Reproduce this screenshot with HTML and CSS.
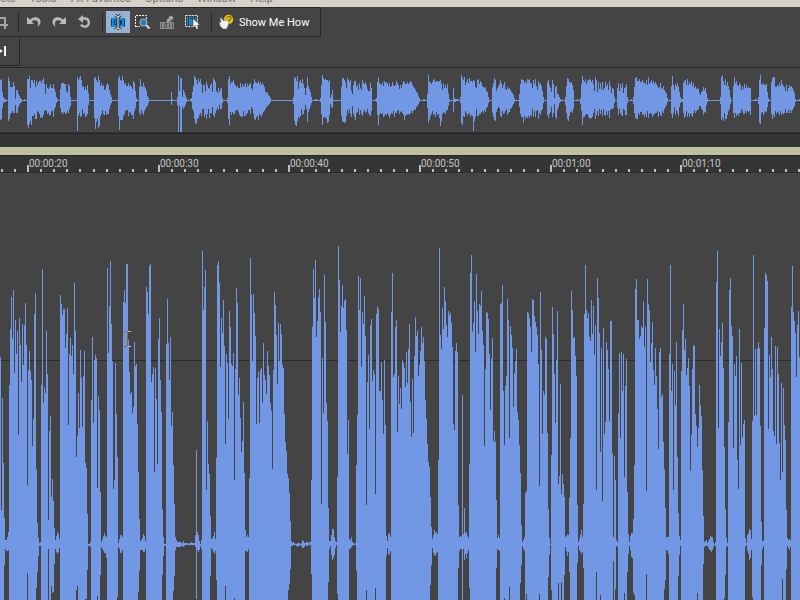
FILE: index.html
```
<!DOCTYPE html>
<html lang="en">

<head>
    <meta charset="UTF-8">
    <meta name="viewport" content="width=device-width, initial-scale=1">
    <title>Audio Editor</title>
    <link rel="stylesheet" href="styles.css">
</head>

<body>

    <!-- Menu bar -->
    <nav class="menu-bar">
        <a href="#">Effects</a>
        <a href="#">Tools</a>
        <a href="#">FX Favorites</a>
        <a href="#">Options</a>
        <a href="#">Window</a>
        <a href="#">Help</a>
    </nav>

    <!-- Toolbars -->
    <header class="toolbars">
        <div class="toolbar">
            <button class="tool-button first" aria-label="Trim">
                <svg class="icon" viewBox="0 0 16 16" fill="none" stroke="#a5a5a5" stroke-width="2">
                    <path d="M4 1v10h12M1 4h12v11" />
                </svg>
            </button>
            <span class="separator"></span>
            <button class="tool-button" aria-label="Undo">
                <svg class="icon" viewBox="0 0 16 16">
                    <path d="M1 3v7h7L5.500 7.500Q8 5.500 10.500 6.500Q13 8 11.500 13Q16 9 14 5.500Q10 .5 4 5.500z" fill="#b9b9b9" />
                </svg>
            </button>
            <button class="tool-button" aria-label="Redo">
                <svg class="icon" viewBox="0 0 16 16">
                    <path d="M15 3v7H8L10.500 7.500Q8 5.500 5.500 6.500Q3 8 4.500 13Q0 9 2 5.500Q6 .5 12 5.500z" fill="#b9b9b9" />
                </svg>
            </button>
            <button class="tool-button" aria-label="Repeat">
                <svg class="icon" viewBox="0 0 16 16">
                    <path d="M6 4.500h4a4.200 4.200 0 1 1-5 6" fill="none" stroke="#b9b9b9" stroke-width="2.400" />
                    <path d="M2 5L7 1v8z" fill="#b9b9b9" />
                </svg>
            </button>
            <span class="separator"></span>
            <button class="tool-button active" aria-label="Edit tool">
                <svg class="icon" viewBox="0 0 16 16">
                    <path d="M1 4h14v9H1z" fill="#0c90e6" />
                    <path d="M1.500 5v7M4.500 6.500h2v4h-2zM10.500 6.500h1v4h-1zM14.500 5v7" fill="none" stroke="#12385e" />
                    <path d="M5 1l3 2 3-2M8 3v11M5 16l3-2 3 2" fill="none" stroke="#333" stroke-width="3" />
                    <path d="M5 1l3 2 3-2M8 3v11M5 16l3-2 3 2" fill="none" stroke="#ccd2d5" stroke-width="1.200" />
                </svg>
            </button>
            <button class="tool-button" aria-label="Magnify tool">
                <svg class="icon" viewBox="0 0 16 16">
                    <path d="M.5 13V1.500h11V5M.5 12.500H5" fill="none" stroke="#eee" stroke-dasharray="2 1" />
                    <path d="M11 11l3.500 3.500" stroke="#ddd" stroke-width="2" />
                    <circle cx="8.500" cy="8.500" r="3.500" fill="#287cb4" stroke="#b5bcc2" />
                </svg>
            </button>
            <button class="tool-button" aria-label="Pencil tool">
                <svg class="icon" viewBox="0 0 16 16">
                    <path d="M0 8h14v7H0z" fill="#8c8c8c" />
                    <path d="M1.500 9v5M4.500 9.500h2v4h-2zM9.500 9v5M12.500 9v5" fill="none" stroke="#505050" />
                    <path d="M6 9l1-4 4-4 3 3-4 4z" fill="#aaa" stroke="#444" stroke-width=".5" />
                    <path d="M8.500 4l2.500 2.500" stroke="#666" />
                </svg>
            </button>
            <button class="tool-button" aria-label="Event tool">
                <svg class="icon" viewBox="0 0 16 16">
                    <path d="M.5 1.500h12v11H.5z" fill="none" stroke="#eee" stroke-dasharray="2 1" />
                    <path d="M2 3h9v8H2z" fill="#2684bd" />
                    <path d="M3.500 3v8M5 4.500h3v5M9.500 3v4" fill="none" stroke="#183e5d" />
                    <path d="M8 4.500v9l2-2 1.500 4 2-1-1.500-3.500h3z" fill="#f4f4f4" stroke="#444" stroke-width=".5" />
                </svg>
            </button>
            <span class="separator"></span>
            <button class="tool-button show-me">
                <svg class="icon" viewBox="0 0 16 16">
                    <circle cx="9.500" cy="5.500" r="4.700" fill="#e3c200" />
                    <path d="M8 4q0-1.500 2-1.500 2.500 0 2 2L10 6.500" fill="none" stroke="#7b6a10" stroke-width="1.200" />
                    <path d="M1 4l1-.5L4.500 7V5.500L6 7l1-1.500L8.500 7 10 6l-.5 5-2 4H4l-3-3-1-4 2 .5z" fill="#f0f0f0" stroke="#555" stroke-width=".5" />
                </svg>
                Show Me How
            </button>
        </div>
        <div class="toolbar transport">
            <button class="tool-button first" aria-label="Go to end">
                <svg class="icon" viewBox="0 0 16 16">
                    <path d="M3 3l8 5-8 5zM12 3h2v10h-2z" fill="#f4f4f4" />
                </svg>
            </button>
        </div>
    </header>

    <!-- Whole file overview -->
    <section class="overview">
        <svg id="overview-wave" viewBox="0 68 800 64" preserveAspectRatio="none"></svg>
    </section>
    <div class="marker-bar"></div>
    <div class="scroll-bar"></div>

    <!-- Time ruler -->
    <div class="ruler">
        <svg id="ruler-ticks" viewBox="0 156 800 16" preserveAspectRatio="xMinYMin slice"></svg>
    </div>

    <!-- Waveform -->
    <main class="wave-panel">
        <svg id="main-wave" viewBox="0 173 800 427" preserveAspectRatio="none"></svg>
    </main>

    <script src="waveform.js"></script>

</body>

</html>
```
FILE: styles.css
```
/* Editor window */
body {
    font-family: Roboto, sans-serif;
    font-size: 11px;
    color: #fff;
    margin: 0;
    height: 100vh;
    display: flex;
    flex-direction: column;
    background-color: #444;
    overflow: hidden;
}

svg {
    display: block;
    width: 100%;
    height: 100%;
}

/* Menu */
.menu-bar {
    display: flex;
    align-items: flex-end;
    flex-shrink: 0;
    gap: 14px;
    height: 7px;
    background-color: #d6d2c9;
    overflow: hidden;
}

.menu-bar a {
    color: #77756f;
    line-height: 17px;
    text-decoration: none;
    white-space: nowrap;
}

.menu-bar a:first-child {
    margin-left: -19px;
}

/* Toolbars */
.toolbars {
    display: flex;
    flex-direction: column;
    align-items: flex-start;
    flex-shrink: 0;
    height: 60px;
}

.toolbar {
    display: flex;
    align-items: center;
    gap: 1px;
    padding: 3px 7px 3px 0;
    border: solid #262626;
    border-width: 1px 1px 1px 0;
}

.toolbar.transport {
    border-top: none;
}

.tool-button {
    display: flex;
    align-items: center;
    gap: 4px;
    height: 22px;
    padding: 0 4px;
    border: none;
    background: none;
    color: #fff;
    font-family: inherit;
    font-size: 11px;
    white-space: nowrap;
}

.tool-button.first {
    margin-left: -12px;
}

.tool-button.active {
    background-color: #96b1d2;
}

.tool-button .icon {
    width: 16px;
    height: 16px;
    flex-shrink: 0;
}

.separator {
    width: 1px;
    height: 20px;
    margin: 0 2px 0 5px;
    background-color: #292929;
}

/* Overview */
.overview {
    flex-shrink: 0;
    height: 64px;
    border-top: 1px solid #262626;
    border-bottom: 1px solid #353535;
}

.marker-bar {
    flex-shrink: 0;
    height: 13px;
    border-top: 1px solid #222;
    background-color: #353535;
}

.scroll-bar {
    flex-shrink: 0;
    height: 8px;
    background-color: #c0c1a0;
}

/* Ruler */
.ruler {
    flex-shrink: 0;
    height: 16px;
    border-top: 1px solid #262626;
    border-bottom: 1px solid #2d2d2d;
    background-color: #353535;
}

.ruler text {
    font-size: 10px;
    fill: #c6c6c6;
}

.tick {
    fill: #bdbdbd;
}

/* Waveform */
.wave-panel {
    flex: 1;
    min-height: 0;
}

.wave {
    fill: #7297e4;
    shape-rendering: crispEdges;
}

.level-line {
    fill: #2c2c2c;
}

.edit-cursor {
    fill: #93691c;
}

.edit-cursor-end {
    fill: #c4c4c4;
}
```
FILE: waveform.js
```
// Top edge of every column, 20 columns on a line
const tops = [
    357,510,398,463,518,540,540,537,532,385,329,297,339,290,373,320,354,331,435,318,
    345,382,324,365,325,303,345,485,370,351,371,380,446,419,314,293,469,523,538,543,
    542,385,269,403,387,393,331,374,520,431,416,497,479,501,528,540,536,532,534,539,
    295,304,315,309,309,348,334,308,425,354,338,356,345,374,283,331,457,436,393,428,
    350,378,427,376,351,463,468,514,544,544,542,400,337,423,360,355,358,488,396,410,
    492,542,539,536,533,536,537,268,353,306,261,324,361,489,480,363,414,457,543,539,
    535,535,537,302,290,303,264,264,340,372,394,392,413,407,342,366,364,424,472,519,
    541,540,538,534,536,541,287,292,314,266,264,382,374,367,472,368,399,464,339,318,
    380,412,509,537,544,544,344,299,343,380,337,426,412,465,504,537,540,542,542,542,
    542,543,543,541,543,543,543,543,544,543,543,542,543,543,543,535,450,532,535,541,
    544,540,251,310,287,270,490,421,464,474,516,539,538,536,532,539,458,265,261,283,
    367,318,333,300,346,444,354,363,419,311,327,364,366,353,480,369,288,303,395,378,
    418,452,441,402,473,530,537,535,537,478,258,295,361,294,313,336,424,378,372,423,
    370,368,403,343,375,380,394,351,366,375,403,411,469,370,292,305,335,384,323,361,
    324,334,365,368,414,442,451,474,478,493,521,541,543,542,543,544,544,543,543,543,
    544,543,540,541,543,543,542,542,543,542,542,480,327,269,298,260,337,321,297,289,
    312,504,358,413,275,322,403,421,508,541,541,535,529,529,537,541,542,477,246,280,
    332,306,285,308,301,299,330,454,420,539,540,537,542,543,544,543,465,415,276,310,
    278,367,312,324,296,336,505,382,355,429,325,319,381,370,374,494,314,306,309,391,
    391,362,400,434,360,425,536,541,534,533,537,312,273,377,374,327,320,432,376,404,
    388,409,360,363,368,387,352,383,349,324,402,437,379,433,356,317,336,331,376,365,
    351,327,343,337,361,400,419,444,462,467,497,527,539,535,530,533,532,534,460,248,
    335,349,308,329,287,301,325,337,311,315,313,323,347,424,430,351,343,352,505,537,
    536,537,395,534,508,533,532,536,538,464,273,255,332,323,301,352,274,311,334,304,
    306,291,331,345,446,369,312,313,319,354,410,359,338,441,431,442,500,538,535,538,
    304,303,285,391,445,386,376,299,320,438,326,335,348,407,373,361,349,412,420,445,
    473,525,542,540,537,493,491,312,313,318,327,352,299,300,316,322,327,335,364,486,
    292,350,434,391,395,337,339,433,509,538,544,455,307,334,374,423,360,311,484,476,
    384,494,474,484,497,537,536,534,535,498,438,291,310,338,337,356,376,505,542,539,
    535,530,537,504,314,265,310,318,313,337,341,300,334,306,355,325,490,278,298,333,
    452,348,501,328,434,422,342,350,369,421,321,321,453,537,456,480,540,542,413,353,
    438,352,391,354,477,386,359,492,534,542,536,533,533,519,465,289,279,320,320,339,
    336,326,328,301,347,327,491,279,304,310,362,343,322,370,385,348,376,409,449,352,
    348,397,394,442,469,508,537,537,537,354,265,391,364,490,371,405,342,457,513,536,
    540,371,330,304,350,339,375,368,358,386,471,435,369,345,346,414,426,447,428,385,
    405,416,470,516,542,541,540,543,541,539,536,537,537,542,544,542,282,251,428,329,
    356,342,323,368,447,509,538,543,422,290,278,326,336,448,364,376,356,460,489,329,
    445,363,437,424,420,538,543,535,533,529,530,539,421,255,416,349,415,349,342,348,
    426,522,541,541,328,273,275,281,429,355,377,337,369,431,436,346,444,347,374,443,
    480,383,472,388,425,440,510,538,540,539,540,307,266,312,321,333,377,325,311,357
];

// Bottom edge, [first column, values...], everything else runs off the panel
const bottoms = [
    [4, 565,549,551,551,550], [27, 573], [36, 588,572,556,546,546], [48, 549], [51, 586,593,592,564,549,552,554,552,548],
    [76, 590,586], [85, 599,599,570,546,546,547], [97, 596], [100, 575,547,549,551,553,553,558], [117, 597,547,549,553,553,550],
    [138, 592,571,550,550,550,552,552,549], [162, 575,556,546,546], [173, 591,576,550,547,547,547,547,547,546,546,547,546,545,545,545,545,545,545,545,545,545,545,547,599,550,552,550,546,549],
    [210, 576,548,550,552,554,551,580], [225, 586], [234, 598], [245, 551,551,552,549],
    [288, 590,584,569,546,546,545,545,545,546,547,546,546,545,546,548,548,547,545,546,546,545,545,545,574],
    [328, 582,549,546,555,560,558,555,548,545,594], [349, 549,549,547,546,545,545,545,571], [366, 590], [375, 588],
    [386, 556,548,554,555,551], [430, 585,565,548,553,555,556,553,552], [458, 568,551,549,549], [463, 549,560,554,558,553,550,588],
    [496, 568,549,550,551], [504, 598], [509, 587], [520, 583,565,546,549,551,600,594], [539, 594], [548, 577,555,545,590], [558, 583], [561, 582],
    [564, 575,547,551,556,552,572], [577, 563,546,550,552,554,552,568], [596, 572], [600, 595], [613, 561], [615, 589,546,547], [624, 593],
    [627, 572,554,546,550,557,558,593,595], [646, 574], [664, 589,580,550,551,554], [678, 576,555,546], [697, 593],
    [703, 564,547,546,546,546,548,550,550,552,550,547,545,546], [724, 598,575,547,546], [745, 547,545,551,554,560,558,550,597],
    [761, 565,549,546], [782, 579], [786, 569,546,548,550,547]
];

// Overview bursts, [first column, up, down, up, down...]
const bursts = [
    [0, 20,19,21,18,8,7,3,2,1,1,1,1],
    [8, 23,20,19,18,13,13,13,12,13,10,18,12,14,12,1,4,10,12,10,12,6,6,4,4,2,2,1,1],
    [24, 1,0],
    [27, 21,24,21,27,24,23,12,20,20,24,20,15,17,15,20,13,13,18,19,18,15,10,18,11,19,13,19,17,17,16,20,17,22,14,16,10,6,9,16,10,12,13,11,12,13,15,16,14,12,10,12,10,16,16,11,8,8,6,3,2,1,0],
    [60, 11,7,17,12,17,11,17,13,16,11,16,13,9,12,7,10,16,12,14,8,3,5],
    [77, 23,30,20,15,22,12,24,16,20,15,13,8,14,13,10,12,13,16,10,15,15,13,7,4],
    [94, 22,17,23,28,20,21,18,18,24,27,20,25,14,15,17,13,14,9,15,13,10,14,11,10,15,14,17,13,15,13,10,8,6,4,3,2],
    [118, 22,15,24,29,20,19,19,19,24,19,20,15,16,13,17,10,14,9,14,9,17,15,14,11,15,12,13,14,11,14,19,18,17,10,9,7,2,1],
    [139, 13,12,21,14,14,9,13,12,17,14,14,10,12,8,9,6,4,5,2,2],
    [171, 8,4,1,0],
    [177, 3,4,25,31,9,5,22,31,22,31,3,6,10,8,8,6,5,4,2,1],
    [190, 1,0,2,1,8,8,14,10,24,18,22,22,20,23,16,18,21,17,18,14,21,12,16,15,7,8,15,8,15,16,9,13,18,18,15,13,12,8,11,17,15,12,17,12,8,6,22,14,20,16,18,12,9,9,7,7,12,9,8,4,11,8,12,8,2,2],
    [227, 2,2,21,18,24,24,16,11,18,14,18,11,20,13,16,13,15,10,13,9,14,9,12,11,12,14,17,15,13,16,16,16,13,10,15,15,17,15,13,13,16,12,14,9,16,9,17,13,12,6,10,8,16,13,21,18,18,19,17,16,17,15,19,19,16,13,18,14,15,16,17,13,15,11,13,10,8,8,8,6,7,5,5,4,4,3,2,1],
    [293, 3,3,23,20,22,24,19,25,24,20,11,16,18,17,20,15,17,8,21,14,16,13,12,9,5,4,12,8,23,21,14,11,11,8,8,5,3,2],
    [315, 1,0,1,0],
    [320, 2,1,15,13,25,24,22,17,20,16,21,16,20,18,20,22,18,21,20,14,2,3,5,6,10,7],
    [341, 13,15,22,20,22,21,20,22,18,21,12,15,22,9,20,12,18,8,20,13,9,16,6,5,15,13,19,16,19,19,13,12,15,11,10,7,17,14,12,9,10,13,20,15,17,11,16,9,18,12,15,11,11,8,9,12,9,14,17,15,12,10],
    [375, 1,0,2,1,18,14,23,24,17,14,16,12,15,13,18,12,14,16,19,15,17,13,18,14,17,12,14,14,17,17,13,14,14,12,18,13,15,10,14,16,15,12,19,12,17,10,15,9,11,13,15,11,12,10,16,12,19,14,18,19,16,15,16,13,18,14,16,13,17,14,19,12,18,10,15,12,13,10,12,8,10,9,8,6,7,5,4,3,2,1],
    [423, 1,0,1,0],
    [427, 6,7,25,22,18,19,18,15,16,13,18,10,20,14,21,13,18,16,19,11,19,14,18,13,19,17,20,25,16,20,10,13,17,11,12,12,15,13,12,10,16,9,7,5,1,1],
    [453, 12,11,2,1,1,1,1,0,1,0],
    [460, 3,2,25,22,22,24,20,15,23,16,15,10,18,12,21,15,17,13,22,12,19,16,19,14,18,15,20,30,19,20,13,16,12,8,20,15,21,15,16,13,19,13,17,11,14,10,13,12,12,9,13,11,9,7,8,6,3,2],
    [492, 13,12,17,16,22,19,20,20,9,11,12,8,14,6,16,7,20,15,17,16,12,10,15,13,18,12,11,10,10,8,13,14,11,12,12,11,10,8,8,7,7,5,5,3,2,1],
    [519, 6,6,16,13,21,16,20,16,20,22,17,15,19,18,17,16,21,17,20,15,21,17,17,14,17,15,12,8,20,16,16,10,21,16,14,10,10,9,19,18,16,12,17,14,14,10,9,8,3,2],
    [547, 18,14,20,17,15,13,12,11,8,6,20,16,16,12,2,3,13,16,14,18,6,9,6,6,3,2,1,1],
    [565, 3,4,14,12,22,18,21,20,18,15,17,11,18,10,15,12,10,8],
    [577, 1,0],
    [580, 2,3,16,10,24,24,20,16,18,16,21,14,16,13,19,13,20,16,21,17,20,18,18,17,20,16,16,12,9,8,23,18,20,14,8,10,18,15,11,8,17,13,11,9,18,15,10,8,12,14,18,15,14,10,16,14,10,10,19,17,14,9,7,8,12,8,11,7,3,2],
    [617, 12,7,17,14,9,8,16,12,12,14,17,15,7,8,12,9,13,14,16,14,3,2],
    [631, 1,0],
    [633, 3,3,13,12,22,17,23,18,19,18,19,12,21,14,18,11,18,11,20,14,18,13,17,16,16,13,20,16,15,10,23,17,16,13,18,12,20,13,17,16,19,14,16,13,18,12,16,12,14,10,12,16,13,11,17,14,12,15,11,10,14,12,10,8,8,6,7,4,2,1],
    [671, 14,13,24,17,15,12,10,6,16,14,14,9,17,12,13,15,8,6,3,2,1,1,1,1,17,12,19,17,20,15,15,10,21,16,15,12,18,16,16,12,19,14,14,16,17,12,12,9,14,12,11,10,12,9,11,8,7,5,5,5,8,8,9,9,13,14,10,11,12,12,7,4,2,1],
    [720, 3,3,23,19,25,17,19,20,15,12,21,18,14,18,18,14,14,10,10,8,3,3],
    [733, 14,12,23,17,17,12,19,15,15,13,14,15,17,12,15,12,10,8,14,10,11,13,16,13,12,10,15,12,12,10,13,11,12,10,12,14],
    [755, 1,0,1,0],
    [758, 3,3,20,22,25,23,16,12,15,11,17,14,15,12,15,10,16,11,8,6,2,1],
    [771, 18,13,22,18,23,14,23,16,13,10,13,13,15,11,14,12,17,14,14,10,20,14,16,12,14,13,13,12,9,8,16,12,9,12,12,9,15,12,13,9,14,12,12,9,10,7,7,5,1,1],
    [799, 1,0]
];

const mainWave = document.getElementById("main-wave");
const overviewWave = document.getElementById("overview-wave");
const rulerTicks = document.getElementById("ruler-ticks");

function rect(x, y, width, height, className) {
    return `<rect class="${className}" x="${x}" y="${y}" width="${width}" height="${height}"/>`;
}

function column(x, top, bottom) {
    return `M${x} ${top}h1V${bottom}h-1z`;
}

// Main waveform
function drawMain() {
    const lows = tops.map(() => 600);
    bottoms.forEach(([start, ...values]) => {
        values.forEach((value, i) => lows[start + i] = value);
    });
    const path = tops.map((top, x) => column(x, top, lows[x])).join("");
    mainWave.innerHTML = rect(0, 360, 800, 1, "level-line") +
        `<path class="wave" d="${path}"/>` +
        rect(124, 331, 3, 1, "edit-cursor") + rect(128, 331, 3, 1, "edit-cursor-end") +
        rect(127, 332, 1, 14, "edit-cursor") +
        rect(124, 346, 3, 1, "edit-cursor") + rect(128, 346, 3, 1, "edit-cursor-end");
}

// Overview waveform
function drawOverview() {
    let path = "M0 100h800v1H0z";
    bursts.forEach(([start, ...levels]) => {
        for (let i = 0; i < levels.length; i += 2) {
            path += column(start + i / 2, 100 - levels[i], 101 + levels[i + 1]);
        }
    });
    overviewWave.innerHTML = `<path class="wave" d="${path}"/>`;
}

// One tick a second, a label every ten
function drawRuler() {
    const labels = ["00:00:20", "00:00:30", "00:00:40", "00:00:50", "00:01:00", "00:01:10"];
    let marks = "";
    for (let second = -2; second < 60; second++) {
        const x = Math.round(27.200 + second * 13.060);
        if (second >= 0 && second % 10 === 0) {
            marks += rect(x, 165, 2, 7, "tick");
            marks += `<text x="${x + 2}" y="167">${labels[second / 10]}</text>`;
        } else {
            marks += rect(x, 169, 2, 3, "tick");
        }
    }
    rulerTicks.innerHTML = marks;
}

drawMain();
drawOverview();
drawRuler();
```
